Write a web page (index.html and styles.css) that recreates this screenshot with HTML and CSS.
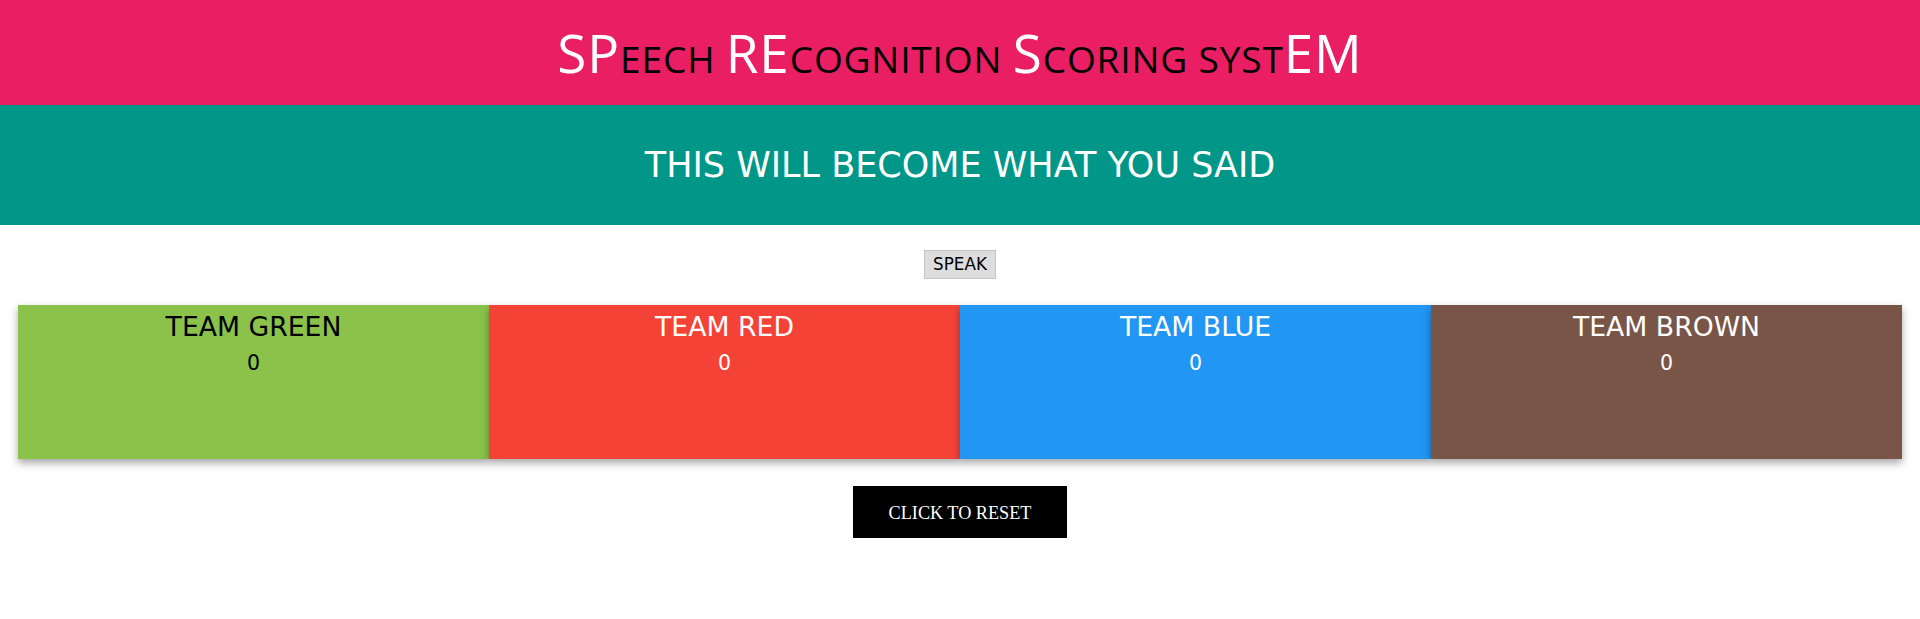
FILE: index.html
```html
<!DOCTYPE html>
<html lang="en">
<head>
<meta charset="utf-8">
<title>Speech Recognition Scoring System</title>
<link rel="stylesheet" href="styles.css">
</head>
<body>
<header class="top">
  <h1 class="title"><span class="big">SP</span><span class="sm">eech </span><span class="big">RE</span><span class="sm">cognition </span><span class="big">S</span><span class="sm">coring syst</span><span class="big">EM</span></h1>
</header>
<section class="said">
  <p class="said-text">THIS WILL BECOME WHAT YOU SAID</p>
</section>
<div class="speak-row">
  <button class="speak">SPEAK</button>
</div>
<div class="teams">
  <div class="team green"><div class="team-name">TEAM GREEN</div><div class="team-score">0</div></div>
  <div class="team red"><div class="team-name">TEAM RED</div><div class="team-score">0</div></div>
  <div class="team blue"><div class="team-name">TEAM BLUE</div><div class="team-score">0</div></div>
  <div class="team brown"><div class="team-name">TEAM BROWN</div><div class="team-score">0</div></div>
</div>
<div class="reset-row">
  <button class="reset">CLICK TO RESET</button>
</div>
</body>
</html>
```

FILE: styles.css
```css
* { box-sizing: border-box; }
html, body { margin: 0; padding: 0; background: #fff; }
body { font-family: "DejaVu Sans", Verdana, sans-serif; }

.top {
  background: #e91e63;
  height: 105px;
  padding-top: 23px;
  text-align: center;
}
.title {
  margin: 0;
  font-family: "Open Sans", "Noto Sans", sans-serif;
  font-weight: 400;
  font-size: 53px;
  line-height: 60px;
  letter-spacing: 0.85px;
}
.big { color: #fff; }
.sm {
  color: #000;
  text-transform: uppercase;
  font-size: 37.1px;
  line-height: 1;
}

.said {
  background: #009688;
  padding: 40px 0;
  text-align: center;
}
.said-text {
  margin: 0;
  color: #fff;
  font-size: 35px;
  line-height: 40px;
}

.speak-row {
  display: flex;
  justify-content: center;
  padding-top: 25px;
}
.speak {
  font-family: "DejaVu Sans", Verdana, sans-serif;
  font-size: 16.8px;
  line-height: 19px;
  height: 29px;
  padding: 4px 8px;
  background: #dddddd;
  border: 1px solid #c4c4c4;
  color: #000;
  border-radius: 0;
}

.teams {
  display: flex;
  margin: 26px 18px 0;
  height: 154px;
}
.team {
  flex: 1;
  text-align: center;
  padding-top: 7px;
  color: #fff;
  box-shadow: 0 4px 8px rgba(0, 0, 0, 0.35);
}
.team-name { font-size: 26.7px; line-height: 30px; }
.team-score { font-size: 20.5px; line-height: 24px; margin-top: 9px; }
.green { background: #8bc34a; color: #000; }
.red { background: #f44336; }
.blue { background: #2196f3; }
.brown { background: #795548; }

.reset-row {
  display: flex;
  justify-content: center;
  padding-top: 27px;
}
.reset {
  width: 214px;
  height: 52px;
  background: #000;
  color: #fff;
  border: 0;
  border-radius: 0;
  font-family: "Liberation Serif", "Times New Roman", serif;
  font-size: 18.2px;
  line-height: 20px;
  padding: 1px 0 0;
}
```
